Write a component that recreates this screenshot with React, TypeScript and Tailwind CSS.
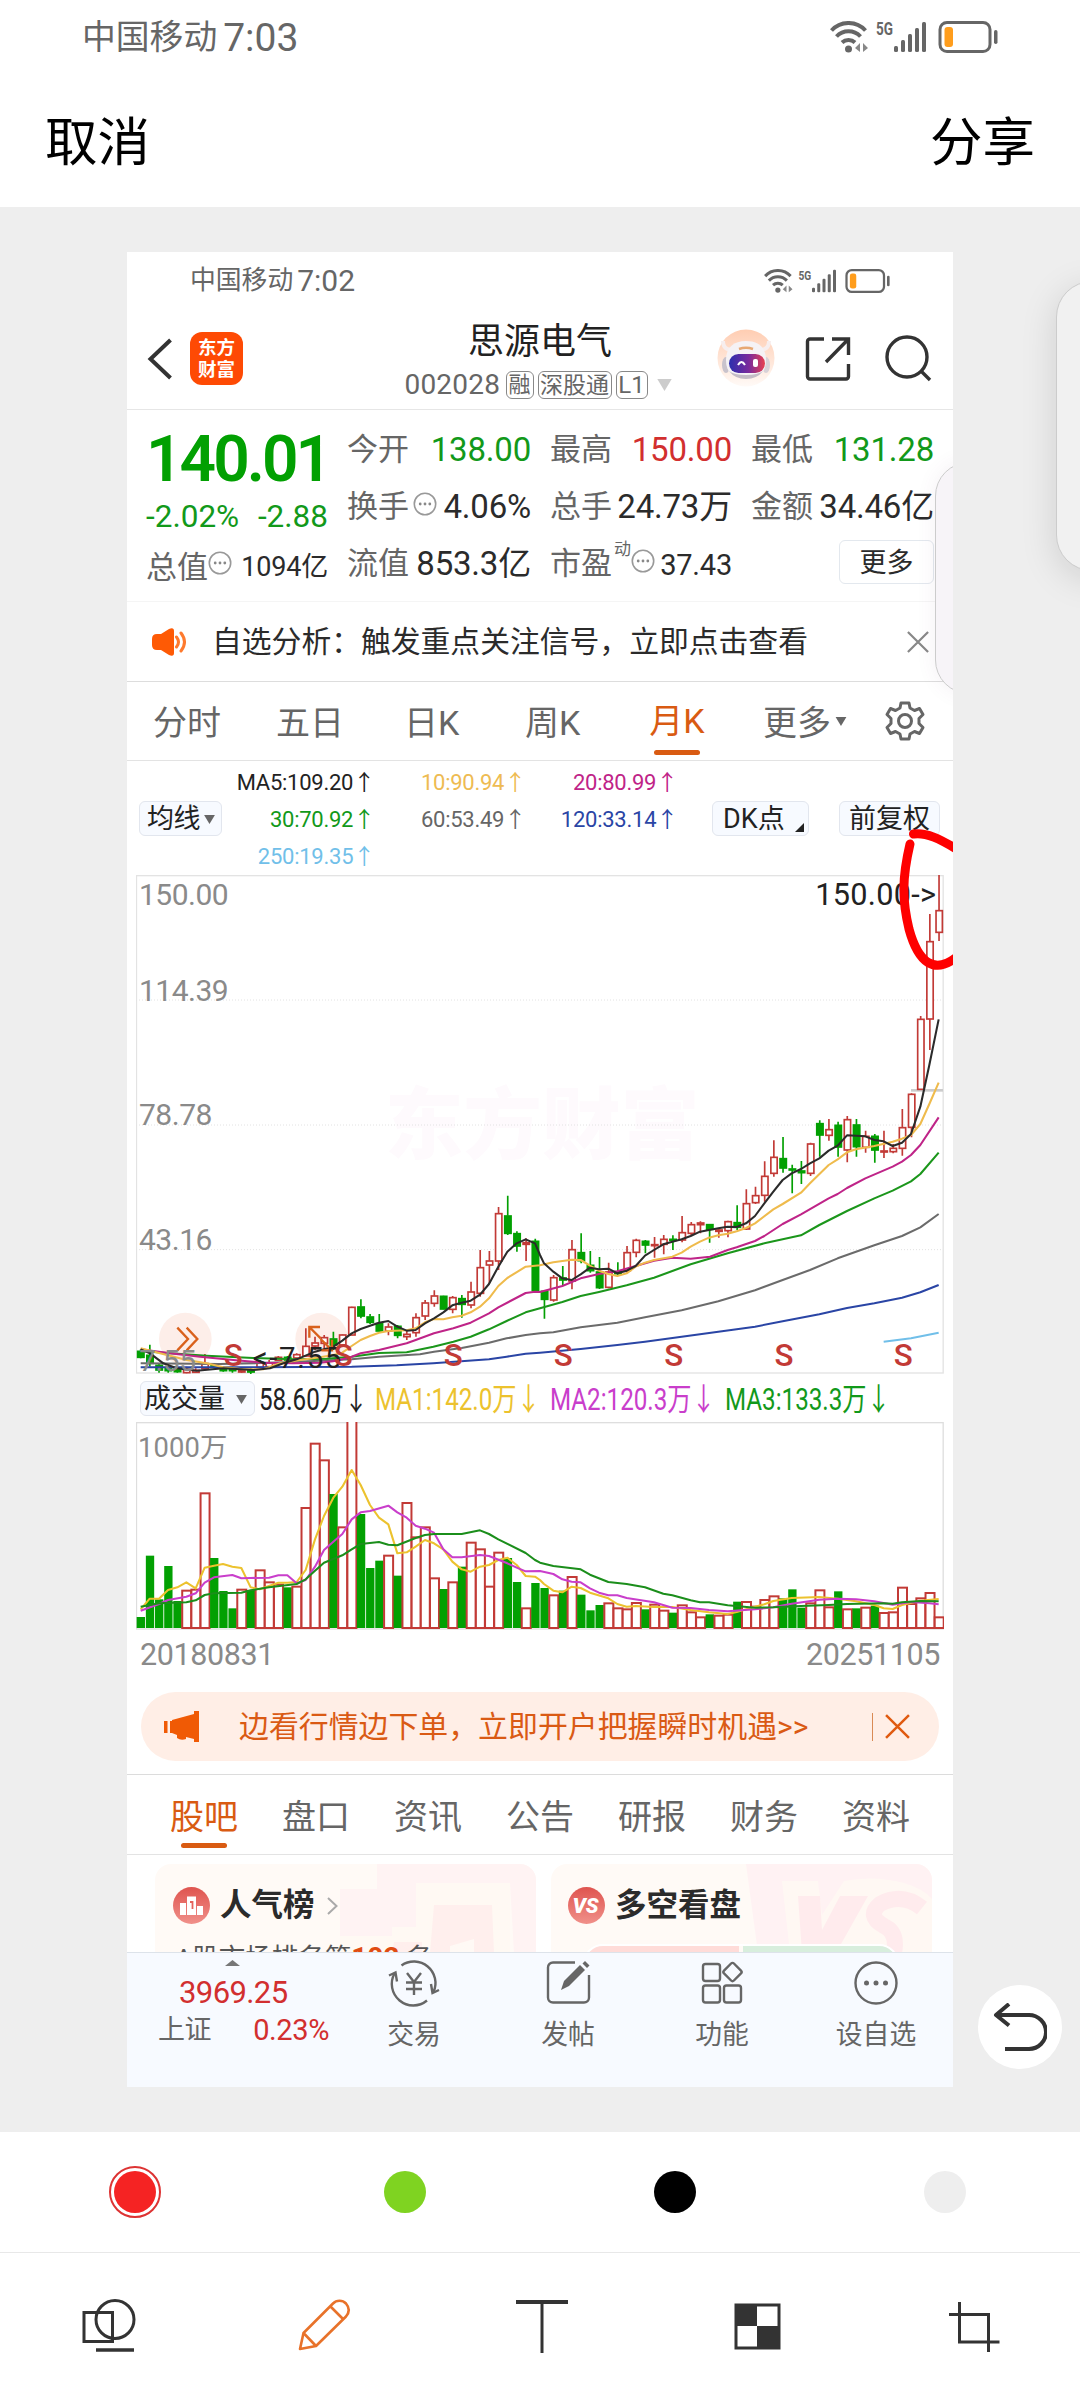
import type { ReactNode } from "react";

type Segment = { dx: number; dy: number; pts: string };

// [direction, high, body top, body bottom, low]
type Candle = [string, number, number, number, number];

const STEP = 27.53;
const FIRST = 14;

const UP = "#c23a36";
const DOWN = "#02a002";

const olderCandles: Candle[] = [
  ["g", 598, 603, 622, 625], ["g", 584, 615, 640, 650], ["g", 640, 645, 660, 668], ["g", 645, 655, 662, 668],
  ["g", 652, 655, 665, 668], ["r", 650, 657, 668, 670], ["r", 655, 660, 667, 668], ["r", 612, 640, 656, 660],
  ["g", 640, 645, 650, 655], ["g", 650, 655, 662, 665], ["g", 650, 656, 662, 668], ["r", 655, 660, 666, 668],
  ["g", 655, 660, 666, 673], ["r", 630, 637, 652, 655], ["r", 630, 638, 650, 652], ["r", 618, 621, 631, 632],
  ["g", 618, 621, 630, 632], ["r", 610, 613, 624, 628], ["r", 535, 588, 618, 620], ["r", 560, 578, 588, 600],
  ["r", 555, 562, 580, 598], ["g", 545, 566, 585, 600], ["r", 553, 554, 585, 590], ["r", 470, 471, 555, 556],
  ["g", 448, 470, 498, 505], ["g", 492, 500, 517, 522], ["g", 492, 520, 543, 545], ["r", 520, 530, 543, 556],
  ["g", 525, 528, 556, 565], ["r", 540, 552, 560, 570], ["r", 490, 502, 548, 560], ["r", 450, 458, 498, 510],
  ["r", 421, 437, 460, 470], ["g", 437, 438, 477, 478], ["r", 438, 442, 478, 490], ["g", 435, 445, 463, 503],
  ["r", 395, 425, 465, 475], ["r", 300, 352, 430, 440], ["r", 303, 332, 345, 400], ["r", 171, 190, 333, 360],
  ["g", 137, 197, 250, 255], ["g", 244, 250, 288, 305], ["r", 265, 277, 283, 333], ["g", 266, 273, 421, 425],
];

const newerCandles: Candle[] = [
  ["g", 870, 873, 898, 956], ["r", 825, 832, 900, 905], ["g", 798, 833, 840, 855], ["r", 720, 748, 843, 868],
  ["g", 700, 757, 782, 790], ["g", 753, 795, 812, 818], ["g", 771, 815, 863, 867], ["r", 788, 815, 862, 865],
  ["g", 787, 814, 821, 828], ["r", 738, 757, 812, 818], ["r", 716, 720, 757, 772], ["g", 720, 723, 735, 760],
  ["r", 711, 733, 737, 773], ["r", 705, 717, 733, 763], ["g", 706, 717, 721, 750], ["r", 648, 697, 720, 727],
  ["r", 666, 673, 700, 705], ["r", 664, 668, 674, 700], ["g", 672, 673, 688, 728], ["r", 685, 689, 694, 713],
  ["r", 662, 664, 692, 712], ["g", 616, 667, 682, 690], ["r", 568, 610, 687, 690], ["r", 560, 586, 608, 612],
  ["r", 484, 528, 586, 605], ["r", 421, 471, 520, 530], ["g", 411, 475, 504, 518], ["g", 494, 506, 510, 580],
  ["g", 483, 512, 518, 552], ["r", 428, 431, 520, 528], ["g", 361, 370, 405, 470], ["r", 357, 388, 406, 422],
  ["g", 365, 375, 441, 470], ["r", 348, 358, 450, 487], ["g", 357, 374, 440, 470], ["r", 392, 408, 442, 458],
  ["g", 402, 408, 450, 488], ["r", 392, 452, 456, 474], ["r", 432, 444, 455, 460], ["r", 327, 382, 445, 467],
  ["r", 280, 282, 382, 412], ["r", 48, 57, 268, 270], ["r", -258, -176, 57, 150], ["r", -375, -269, -203, -177],
];

const candles = [
  ...olderCandles.map(([c, ...v]) => ({ c, v: v.map((n) => n + 825) })),
  ...newerCandles.map(([c, ...v]) => ({ c, v: v.map((n) => n + 375) })),
];

const older = (pts: string): Segment => ({ dx: -48, dy: 825, pts });
const newer = (pts: string): Segment => ({ dx: 1212, dy: 375, pts });
const olderVol = (pts: string): Segment => ({ dx: -48, dy: -126, pts });
const newerVol = (pts: string): Segment => ({ dx: 1212, dy: -126, pts });

const averages: { color: string; segs: Segment[] }[] = [
  {
    color: "#2a45a5",
    segs: [
      older("62,652 400,652 695,650 830,646 940,640 1107,628 1160,620 1217,611"),
      newer("0,1058 122,1047 232,1035 315,1025 425,1010 535,995 645,980 728,964 838,943 921,924 1003,910 1086,893 1141,877 1196,855"),
    ],
  },
  {
    color: "#6b6b6b",
    segs: [
      older("62,640 300,642 500,637 695,628 777,620 900,613 942,605 1025,594 1107,578 1160,565 1217,555"),
      newer("0,1000 40,997 122,982 232,968 315,952 425,931 535,904 645,871 728,840 810,810 893,775 1003,736 1086,708 1141,682 1196,642"),
    ],
  },
  {
    color: "#1b961b",
    segs: [
      older("62,603 150,610 260,617 400,624 520,628 620,626 695,620 777,609 860,607 940,590 1000,575 1052,560 1107,538 1160,513 1217,487"),
      newer("0,925 67,906 122,888 177,876 260,856 342,833 452,793 563,760 673,730 783,706 838,675 921,633 1003,595 1058,572 1113,544 1141,522 1196,458"),
    ],
  },
  {
    color: "#bf2488",
    segs: [
      older("62,598 150,610 240,620 340,630 430,638 520,640 600,638 650,632 695,620 722,610 777,600 860,580 887,570 942,550 1000,535 1052,518 1107,490 1135,472 1217,429 1245,425"),
      newer("0,876 67,858 122,835 177,822 232,814 287,798 342,782 397,773 452,776 510,770 563,750 590,742 645,723 673,708 728,672 783,643 866,595 893,582 921,564 976,535 1058,500 1086,485 1113,465 1141,435 1196,352"),
    ],
  },
  {
    color: "#efbb4c",
    segs: [
      older("62,595 120,610 200,630 260,640 310,652 370,658 430,658 480,640 540,630 600,622 640,615 667,608 695,588 722,570 750,558 777,548 805,543 860,541 887,535 915,517 942,507 970,508 997,502 1025,497 1052,487 1080,470 1107,445 1135,408 1162,384 1217,350 1245,347"),
      newer("0,796 40,787 95,779 122,780 150,797 177,812 205,822 232,828 260,820 287,800 315,788 342,780 397,770 425,758 452,740 480,725 507,713 535,706 563,701 590,694 618,684 645,670 700,628 728,612 783,578 810,550 866,495 893,478 921,457 948,448 1003,438 1058,425 1086,416 1113,405 1141,372 1168,312 1196,248"),
    ],
  },
  {
    color: "#2b2b2b",
    segs: [
      older("62,598 90,610 130,640 170,655 230,662 310,655 400,660 450,655 490,640 530,628 585,605 640,590 667,572 695,550 722,537 750,527 777,518 805,513 832,530 860,542 887,540 915,520 942,505 970,487 997,466 1025,458 1052,452 1080,434 1107,402 1135,350 1162,305 1190,280 1217,268 1245,280"),
      newer("0,765 12,790 40,815 67,835 95,840 122,823 150,803 177,808 205,806 232,820 260,812 287,798 315,767 342,750 370,733 397,725 425,718 452,708 480,695 507,690 535,685 563,680 590,681 618,670 645,648 673,610 700,575 728,540 755,520 783,507 810,490 838,475 866,452 893,437 921,406 976,409 1003,420 1031,424 1058,438 1086,428 1113,402 1141,320 1168,195 1196,58"),
    ],
  },
  { color: "#71bfe9", segs: [newer("1031,1025 1113,1015 1196,998")] },
];

const volumeTops = [
  711, 527, 658, 558, 663, 630, 627, 338, 534, 633, 685, 627, 630, 569, 605, 612, 622, 618, 382, 189, 239, 342,
  440, 120, 402, 564, 542, 525, 587, 367, 470, 440, 593, 627, 605, 560, 486, 506, 618, 516, 534, 606, 683, 609,
  624, 644, 632, 589, 644, 691, 675, 668, 683, 686, 667, 688, 672, 690, 698, 674, 695, 710, 703, 705, 702, 665,
  664, 678, 658, 647, 655, 628, 683, 668, 629, 680, 634, 686, 685, 681, 677, 697, 695, 621, 670, 653, 637, 710,
];
const volumeColors =
  "gggggrrrgggrgrrrgrrrrgrrgggrgrrrrgrgrrrrggrg" + "grgrgggrrrrgrrgrrrgrrgrrrrgggrrrgrgrgrrrrrrr";

const volumeAverages: { color: string; segs: Segment[] }[] = [
  {
    color: "#ecc22e",
    segs: [
      olderVol("62,688 89,656 117,656 144,630 172,622 199,607 227,625 254,563 282,557 309,552 337,560 364,564 392,622 419,628 447,618 475,608 502,608 530,606 557,570 585,478 612,408 640,353 667,320 695,270 722,315 750,375 777,413 805,433 832,520 860,517 887,500 915,480 942,490 970,508 997,545 1025,568 1052,575 1080,560 1107,555 1135,540 1162,533 1190,555 1217,588 1245,590"),
      newerVol("0,600 12,612 40,632 67,637 95,620 122,624 150,638 205,655 232,672 260,680 287,678 342,681 397,681 452,690 507,697 563,702 590,696 645,680 673,673 700,663 755,654 838,651 893,656 948,664 1003,675 1031,685 1058,687 1086,675 1141,662 1196,657"),
    ],
  },
  {
    color: "#c93ecb",
    segs: [
      olderVol("62,692 117,672 144,660 199,650 227,640 254,608 282,592 337,585 364,595 392,594 447,593 475,586 502,586 530,610 557,600 585,560 612,510 640,485 667,462 695,418 722,397 750,393 805,377 832,397 860,413 887,437 915,446 942,458 970,508 997,532 1025,532 1080,525 1107,528 1162,550 1190,563 1217,574"),
      newerVol("0,573 40,582 67,598 95,605 122,607 150,625 177,638 205,646 232,646 260,654 342,667 397,683 452,684 507,690 563,694 645,688 700,682 755,671 838,659 893,656 948,658 1003,664 1058,674 1113,666 1168,670 1196,673"),
    ],
  },
  {
    color: "#1b8e1b",
    segs: [
      olderVol("62,680 117,670 199,667 227,661 254,645 282,640 364,638 392,631 447,622 530,612 557,598 585,572 612,548 667,526 695,508 722,492 777,486 805,494 832,496 887,474 915,465 942,462 1025,462 1080,451 1107,462 1135,478 1217,519 1245,540"),
      newerVol("0,548 40,558 122,568 150,584 205,606 260,612 315,622 370,641 397,646 452,661 480,667 507,667 563,676 645,683 700,682 783,678 866,675 921,672 1031,670 1058,671 1086,667 1141,663 1196,664"),
    ],
  },
];

const joinSegments = (segs: Segment[]) =>
  segs
    .flatMap(({ dx, dy, pts }) =>
      pts.split(" ").map((p) => {
        const [x, y] = p.split(",").map(Number);
        return `${x + dx},${y + dy}`;
      })
    )
    .join(" ");

const Lines = ({ data }: { data: { color: string; segs: Segment[] }[] }) => (
  <>
    {data.map((line) => (
      <polyline
        key={line.color}
        points={joinSegments(line.segs)}
        fill="none"
        stroke={line.color}
        strokeWidth={6.2}
        strokeLinejoin="round"
      />
    ))}
  </>
);

const StatusIcons = ({ className }: { className: string }) => (
  <svg className={className} viewBox="0 0 168 32" fill="none">
    <g stroke="#666" strokeWidth="4">
      <path d="M1.500 9.500a23 23 0 0 1 34 0" />
      <path d="M6.500 15.500a16.500 16.500 0 0 1 24 0" />
      <path d="M12 21.500a9.500 9.500 0 0 1 13 0" />
    </g>
    <circle cx="18.500" cy="28" r="3.500" fill="#666" />
    <path d="M30 22v9l-5-4zM33 22v9l5-4z" fill="#888" />
    <text x="46" y="14" fontSize="18" fontWeight="700" fill="#666" textLength="17" lengthAdjust="spacingAndGlyphs">
      5G
    </text>
    <g fill="#666">
      <rect x="64" y="25" width="4" height="6" rx="1.500" />
      <rect x="71" y="19" width="4" height="12" rx="1.500" />
      <rect x="78" y="13" width="4" height="18" rx="1.500" />
      <rect x="85" y="7" width="4" height="24" rx="1.500" />
      <rect x="92" y="1" width="4" height="30" rx="1.500" />
    </g>
    <rect x="110" y="1.500" width="50" height="29" rx="7" stroke="#666" strokeWidth="3" />
    <rect x="114.500" y="6" width="8.500" height="20" rx="3" fill="#ff9d1c" />
    <rect x="164" y="9" width="3.500" height="14" rx="1.700" fill="#666" />
  </svg>
);

const CircleDots = () => (
  <svg className="size-6" viewBox="0 0 24 24" fill="none">
    <circle cx="12" cy="12" r="10.700" stroke="#999" strokeWidth="1.600" />
    <g fill="#888">
      <circle cx="7.200" cy="12" r="1.400" />
      <circle cx="12" cy="12" r="1.400" />
      <circle cx="16.800" cy="12" r="1.400" />
    </g>
  </svg>
);

const Cross = ({ className, color }: { className: string; color: string }) => (
  <svg className={className} viewBox="0 0 24 24" fill="none" stroke={color} strokeWidth="2.400">
    <path d="M1 1l22 22M23 1L1 23" />
  </svg>
);

const Triangle = ({ className }: { className: string }) => (
  <svg className={className} viewBox="0 0 12 10" fill="currentColor">
    <path d="M0 0h12L6 10z" />
  </svg>
);

const TitleBar = () => (
  <header className="flex h-[102px] items-start border-b border-[#e6e6e6] pl-[20px]">
    <svg className="mt-[30px] h-[42px] w-[26px]" viewBox="0 0 26 42" fill="none" stroke="#333" strokeWidth="4">
      <path d="M23.500 2L3.500 21l20 19" />
    </svg>
    <div className="mt-6 ml-[17px] flex size-[53px] flex-col items-center justify-center rounded-xl bg-[#fe4a04] text-[18.500px] leading-[22px] font-bold text-white">
      <span>东方</span>
      <span>财富</span>
    </div>
    <div className="ml-[149px] flex w-[296px] flex-col items-center">
      <h1 className="mt-[15px] text-[36px] leading-[38px] text-[#222]">思源电气</h1>
      <div className="mt-[10px] -ml-[3px] flex h-7 w-[268px] items-center gap-1 text-[25px] leading-none text-[#666]">
        <span className="w-[97px] text-[28px] tracking-[0.2px]">002028</span>
        <span className="flex h-7 w-7 items-center justify-center rounded-md border border-[#888] text-[22px]">融</span>
        <span className="flex h-7 w-[74px] items-center justify-center rounded-md border border-[#888] text-[23px]">深股通</span>
        <span className="flex h-7 w-8 items-center justify-center rounded-md border border-[#888] text-[24px]">L1</span>
        <Triangle className="ml-1 h-[12px] w-[17px] shrink-0 text-[#ccc]" />
      </div>
    </div>
    <svg className="mt-[21px] ml-[29px] size-[58px]" viewBox="0 0 58 58">
      <defs>
        <linearGradient id="halo" x1="0" y1="0" x2="0" y2="1">
          <stop offset="0" stopColor="#ffcdb2" />
          <stop offset="1" stopColor="#fffaf7" />
        </linearGradient>
        <linearGradient id="visor" x1="0" y1="0" x2="1" y2="0">
          <stop offset="0" stopColor="#2c2fae" />
          <stop offset="0.550" stopColor="#7a2a9c" />
          <stop offset="1" stopColor="#e8404f" />
        </linearGradient>
      </defs>
      <circle cx="29" cy="29" r="28.500" fill="url(#halo)" />
      <path d="M6 12c0 8 6 10 12 8M52 12c0 8-6 10-12 8" fill="none" stroke="#f7eeee" strokeWidth="4" />
      <ellipse cx="9" cy="36" rx="4" ry="8" fill="#c9c3cc" />
      <ellipse cx="49" cy="36" rx="4" ry="8" fill="#d8d2d8" />
      <path d="M9 31c0-13 8-19 20-19s20 6 20 19-7 18-20 18S9 44 9 31z" fill="#f5f2f5" />
      <path d="M12 42q6 8 17 8t17-8q-5 4-17 4t-17-4z" fill="#c4bcc6" />
      <path d="M22 20q7-2.500 14 0" stroke="#e7a873" strokeWidth="2.500" fill="none" />
      <rect x="12" y="25" width="36" height="19" rx="9.500" fill="url(#visor)" />
      <path d="M21 36q3.500-6 7 0" stroke="#fff" strokeWidth="2" fill="none" />
      <rect x="36" y="30" width="5" height="8" rx="2" fill="#fff" />
    </svg>
    <svg className="mt-[28px] ml-[30px] h-[46px] w-[46px]" viewBox="0 0 46 46" fill="none" stroke="#333" strokeWidth="3.400">
      <path d="M19 3H5a2.500 2.500 0 0 0-2.500 2.500v35A2.500 2.500 0 0 0 5 43h36a2.500 2.500 0 0 0 2.500-2.500V28" />
      <path d="M27 3h16.500v16M43 3.500L21 26" />
    </svg>
    <svg className="mt-[26px] ml-[34px] size-[48px]" viewBox="0 0 48 48" fill="none" stroke="#333" strokeWidth="3.400">
      <circle cx="22" cy="23" r="20" />
      <path d="M36 37l9 9" />
    </svg>
  </header>
);

const Stat = ({ label, children, color = "text-[#2b2b2b]" }: { label: ReactNode; children: ReactNode; color?: string }) => (
  <div className="flex h-[57px] items-center justify-between whitespace-nowrap">
    <span className="flex items-center text-[31px] text-[#666]">{label}</span>
    <span className={`text-[33px] tracking-[-0.2px] ${color}`}>{children}</span>
  </div>
);

const Quote = () => (
  <section className="grid h-[192px] grid-cols-[181px_184px_182px_183px] gap-x-[19px] border-b border-[#f5f5f5] pl-5 leading-none">
    <div className="flex flex-col pt-[22px]">
      <span className="flex h-14 items-center justify-center text-[64px] font-semibold tracking-[-3px] text-[#02a002]">140.01</span>
      <span className="mt-0.5 -ml-px flex h-[54px] items-center justify-between text-[31.500px] text-[#12991a]">
        <span>-2.02%</span>
        <span>-2.88</span>
      </span>
      <span className="-ml-px flex h-[46px] items-center justify-between text-[31px] whitespace-nowrap text-[#666]">
        <span className="flex items-center">总值<span className="mb-2"><CircleDots /></span></span>
        <span className="text-[27px] tracking-[-0.2px] text-[#2b2b2b]">1094亿</span>
      </span>
    </div>
    <div className="pt-[11px]">
      <Stat label="今开" color="text-[#12991a]">138.00</Stat>
      <Stat label={<>换手<span className="mb-1.5 ml-1"><CircleDots /></span></>}>4.06%</Stat>
      <Stat label="流值">853.3亿</Stat>
    </div>
    <div className="pt-[11px]">
      <Stat label="最高" color="text-[#d22f2f]">150.00</Stat>
      <Stat label="总手">24.73万</Stat>
      <Stat label={<>市盈<span className="mb-7 ml-0.5 text-[17px]">动</span><span className="mb-1.5"><CircleDots /></span></>}>
        <span className="text-[29px]">37.43</span>
      </Stat>
    </div>
    <div className="pt-[11px]">
      <Stat label="最低" color="text-[#12991a]">131.28</Stat>
      <Stat label="金额">34.46亿</Stat>
      <button className="mt-[5px] ml-auto flex h-11 w-[95px] items-center justify-center rounded-md border border-[#e3e8ee] pt-0.5 text-[27px] text-[#2b2b2b]">
        更多
      </button>
    </div>
  </section>
);

const Notice = () => (
  <div className="flex h-20 items-center border-b border-[#ddd] pl-[25px] text-[29.8px] leading-none text-[#2b2b2b]">
    <svg className="h-[28px] w-[35px]" viewBox="0 0 35 28" fill="none">
      <path d="M0 11q0-5 5-5h4l8-5q5-2 5 2v22q0 4-5 2l-8-5H5q-5 0-5-5z" fill="#fe5a05" />
      <path d="M24.500 9q4 5 0 10M29 5q7 9 0 18" stroke="#fe7a2e" strokeWidth="3" strokeLinecap="round" />
    </svg>
    <span className="ml-[25px] w-[695px]">自选分析：触发重点关注信号，立即点击查看</span>
    <Cross className="h-[22px] w-[22px]" color="#888" />
  </div>
);

const periods = ["分时", "五日", "日K", "周K"];

const PeriodTabs = () => (
  <nav className="grid h-[79px] grid-cols-[123px_128px_121px_123px_115px_122px_60px] items-center border-b border-[#e3e3e3] pl-[26px] text-[34px] leading-none text-[#666]">
    {periods.map((p) => (
      <span key={p} className="mt-1">{p}</span>
    ))}
    <span className="flex h-full w-[58px] flex-col items-center justify-end text-[#d95b12]">
      <span className="mb-3">月K</span>
      <span className="mb-[5px] h-[5px] w-[46px] rounded-full bg-[#d95b12]" />
    </span>
    <span className="mt-1 flex items-center">
      更多
      <Triangle className="mb-1 ml-1 h-[9px] w-3" />
    </span>
    <svg className="size-10" viewBox="0 0 40 40" fill="none" stroke="#666" strokeWidth="3" strokeLinejoin="round">
      <path d="M16 2h8l1 5 4.500 2.500 5-2 3.500 6-4 4v5l4 4-3.500 6-5-2L25 33l-1 5h-8l-1-5-4.500-2.500-5 2-3.500-6 4-4v-5l-4-4 3.500-6 5 2L15 7z" />
      <circle cx="20" cy="20" r="6.500" />
    </svg>
  </nav>
);

const chip = "flex h-[35px] items-center rounded-md border border-[#e2e6ee] bg-[#f7faff] text-[27px] text-[#222]";

const AverageLegend = () => (
  <div className="flex h-[114px] items-start pl-3 leading-none whitespace-nowrap">
    <span className={`${chip} mt-[40px] w-[83px] pt-0.5 pl-[7px] tracking-[-0.5px]`}>
      均线
      <Triangle className="ml-1 h-[9px] w-[11px] text-[#666]" />
    </span>
    <div className="-mr-0.5 ml-0.5 grid w-[454px] grid-cols-[151px_151px_152px] pt-[3px] text-right text-[22px] leading-[37px] tracking-[-0.25px]">
      <span className="text-[#222]">MA5:109.20↑</span>
      <span className="text-[#eebb52]">10:90.94↑</span>
      <span className="text-[#bf2488]">20:80.99↑</span>
      <span className="text-[#12991a]">30:70.92↑</span>
      <span className="text-[#666]">60:53.49↑</span>
      <span className="text-[#2a45a5]">120:33.14↑</span>
      <span className="text-[#71bfe9]">250:19.35↑</span>
    </div>
    <span className={`${chip} mt-[40px] ml-[36px] w-[97px] justify-between pt-0.5 pr-1 pl-[10px]`}>
      DK点
      <svg className="mt-4 size-[9px]" viewBox="0 0 9 9">
        <path d="M9 0v9H0z" fill="#222" />
      </svg>
    </span>
    <span className={`${chip} mt-[40px] ml-[30px] w-[101px] justify-center pt-0.5`}>前复权</span>
  </div>
);

const scale = [
  { label: "150.00", y: 90 },
  { label: "114.39", y: 378 },
  { label: "78.78", y: 750 },
  { label: "43.16", y: 1125 },
  { label: "7.55", y: 1488 },
];

const PriceChart = () => (
  <svg className="ml-[9px] h-[499px] w-[808px]" viewBox="0 0 2424 1497">
    <text x="1218" y="834" fontSize="236" fontWeight="900" fill="#fefafd" textAnchor="middle">
      东方财富
    </text>
    <rect x="1.500" y="2" width="2420" height="1492" fill="none" stroke="#e3e3e3" strokeWidth="4" />
    <g stroke="#e2e2e2" strokeWidth="3" strokeDasharray="3 6">
      <path d="M0 375H2421M0 750H2421M0 1124H2421" />
    </g>
    <circle cx="148" cy="1392" r="79" fill="#fdeee9" />
    <circle cx="557" cy="1392" r="79" fill="#fdeee9" />
    <path d="M2325 646H2421" stroke="#ccc" strokeWidth="8" />
    {candles.map(({ c, v: [high, top, bottom, low] }, i) => {
      const x = FIRST + STEP * i;
      const color = c === "g" ? DOWN : UP;
      const height = Math.max(bottom - top, 3);
      return (
        <g key={i} stroke={color} strokeWidth={5} fill={c === "g" ? DOWN : "#fff"}>
          <path d={`M${x} ${high}V${top}M${x} ${bottom}V${low}`} />
          <rect x={x - 9} y={top + 1} width={19} height={height - 1} />
        </g>
      );
    })}
    <Lines data={averages} />
    <g fill="none" stroke="#d9611c" strokeWidth="7">
      <path d="M124 1358l32 34-32 34M152 1358l32 34-32 34" />
      <path d="M552 1356h-32v32M520 1356l34 34M556 1426h32v-32M588 1426l-34-34" />
    </g>
    <g fontSize="90" fill="#8a8a8a">
      {scale.map((s) => (
        <text key={s.label} x="9" y={s.y} letterSpacing="-1.500">{s.label}</text>
      ))}
    </g>
    <text x="2038" y="90" fontSize="92" fill="#222" textLength="362">150.00-&gt;</text>
    <text x="350" y="1480" fontSize="88" fill="#222" textLength="266">&lt;-7.55</text>
    <g fontSize="94" fontWeight="500" fill={UP} textAnchor="middle">
      {[292, 622, 952, 1282, 1613, 1944, 2302].map((x) => (
        <text key={x} x={x} y="1473">S</text>
      ))}
    </g>
  </svg>
);

const volumeLegend = [
  { text: "58.60万↓", color: "#222", width: 112 },
  { text: "MA1:142.0万↓", color: "#ecc22e", width: 171 },
  { text: "MA2:120.3万↓", color: "#c93ecb", width: 171 },
  { text: "MA3:133.3万↓", color: "#12991a", width: 171 },
];

const VolumeLegend = () => (
  <div className="flex h-12 items-center pl-[13px] leading-none whitespace-nowrap">
    <span className={`${chip} w-[115px] justify-between pt-0.5 pr-[7px] pl-[3px]`}>
      成交量
      <Triangle className="h-[9px] w-[11px] text-[#666]" />
    </span>
    {volumeLegend.map((v) => (
      <span key={v.text} className="mt-0.5 ml-1 text-[31px]" style={{ width: v.width, color: v.color }}>
        <span className="inline-block origin-left scale-x-[0.78]">{v.text}</span>
      </span>
    ))}
  </div>
);

const VolumeChart = () => (
  <svg className="ml-[9px] h-[208px] w-[808px]" viewBox="0 0 2424 624">
    <rect x="1.500" y="2" width="2420" height="619" fill="none" stroke="#dedede" strokeWidth="4" />
    {volumeTops.map((t, i) => {
      const x = FIRST + STEP * i;
      const y = Math.max(t - 126, -10);
      return volumeColors[i] === "g" ? (
        <rect key={i} x={x - 12} y={y} width={25} height={618 - y} fill={DOWN} />
      ) : (
        <rect key={i} x={x - 13} y={y + 2} width={27} height={616 - y} fill="#fff" stroke={UP} strokeWidth={6} />
      );
    })}
    <Lines data={volumeAverages} />
    <text x="6" y="105" fontSize="82" fill="#8a8a8a" textLength="268">1000万</text>
  </svg>
);

const Promo = () => (
  <div className="h-[95px] border-b border-[#dcdcdc] pt-3 pl-3.5">
    <div className="flex h-[69px] w-[798px] items-center rounded-full bg-[#ffeee6] pl-[23px] text-[29.9px] leading-none text-[#da5a14]">
      <svg className="h-8 w-[35px]" viewBox="0 0 35 32" fill="#f05a05">
        <path d="M0 10h3.500v12H0zM6 10h2v12H6zM8 9l22-6V0h5v31h-5v-3l-8-2v2q-5 2-9-1v-3l-5-2z" />
      </svg>
      <span className="ml-[40px] flex-1 whitespace-nowrap">边看行情边下单，立即开户把握瞬时机遇&gt;&gt;</span>
      <span className="h-7 w-px bg-[#d98a55]" />
      <Cross className="mr-[29px] ml-3 size-[25px]" color="#e05a10" />
    </div>
  </div>
);

const sections = ["股吧", "盘口", "资讯", "公告", "研报", "财务", "资料"];

const SectionTabs = () => (
  <nav className="flex h-20 border-b border-[#e3e3e3] pl-[21px] text-[34px] leading-none text-[#666]">
    {sections.map((s, i) => (
      <span key={s} className={`flex w-28 flex-col items-center pt-[25px] ${i === 0 ? "text-[#d95b12]" : ""}`}>
        {s}
        {i === 0 && <span className="mt-[9px] h-[5px] w-[46px] rounded-full bg-[#d95b12]" />}
      </span>
    ))}
  </nav>
);

const Cards = () => (
  <div className="flex h-[97px] gap-[15px] overflow-hidden pt-[9px] pl-7 leading-none">
    <div className="relative h-[140px] w-[381px] overflow-hidden rounded-2xl bg-[#fffaf6]">
      <svg className="absolute top-0 right-0 h-[89px] w-[196px]" viewBox="0 0 196 89">
        <path d="M37 0h159v89h-22l-4-70H76v44H52v9H0V25h37z" fill="#fff3f3" />
        <path d="M76 19h94v70H0V72h52v-9h24z" fill="#fff9f3" />
        <path d="M94 41h58l2 48H90zM54 78h28v11H52z" fill="#ffefed" />
        <path d="M110 82l24-7v14h-24z" fill="#fff9f5" />
      </svg>
      <div className="relative flex items-center pt-[23px] pl-[18px]">
        <svg className="size-[37px]" viewBox="0 0 37 37">
          <defs>
            <linearGradient id="badge" x1="0" y1="0" x2="0" y2="1">
              <stop offset="0" stopColor="#df544f" />
              <stop offset="1" stopColor="#f0908a" />
            </linearGradient>
          </defs>
          <circle cx="18.500" cy="18.500" r="18.500" fill="url(#badge)" />
          <path d="M7 16h6v12H7zM14 9.500h9V28h-9zM24 19h6v9h-6z" fill="#fff" />
          <path d="M17 15h2.500v7" stroke="#e5645d" strokeWidth="1.800" fill="none" />
        </svg>
        <span className="ml-2.5 text-[31.500px] font-bold text-[#2b2b2b]">人气榜</span>
        <svg className="ml-3 h-[18px] w-[11px]" viewBox="0 0 11 18" fill="none" stroke="#aaa" strokeWidth="2">
          <path d="M1 1l8.500 8L1 17" />
        </svg>
      </div>
      <div className="relative mt-[20px] pl-[20px] text-[26.500px] whitespace-nowrap text-[#555]">
        A股市场排名第<b className="text-[28px] text-[#e04c12]">102</b> 名
      </div>
    </div>
    <div className="relative h-[140px] w-[381px] overflow-hidden rounded-2xl bg-[#fffaf6]">
      <svg className="absolute top-0 right-0 h-[89px] w-[186px]" viewBox="0 0 186 89">
        <path d="M0 0h186v89H12z" fill="#fff2f3" />
        <path d="M36 17h36l4 34 22-34q30-6 60 2 20 6 28 16v54H44z" fill="#fff8f3" />
        <path d="M52 32h22l2 34 18-34h28L90 89H56z" fill="#ffebed" />
        <path d="M176 44q-20-16-42-4-14 12 4 22 14 6 10 27" fill="none" stroke="#ffebed" strokeWidth="16" />
      </svg>
      <div className="relative flex items-center pt-[23px] pl-[17px]">
        <svg className="size-[37px]" viewBox="0 0 37 37">
          <circle cx="18.500" cy="18.500" r="18.500" fill="url(#badge)" />
          <text x="17.500" y="26" fontSize="21" fontWeight="900" fontStyle="italic" fill="#fff" textAnchor="middle">VS</text>
        </svg>
        <span className="ml-2.5 text-[31.500px] font-bold text-[#2b2b2b]">多空看盘</span>
      </div>
      <div className="relative mt-[20px] ml-8 flex h-10 w-[316px] gap-1 overflow-hidden rounded-[20px] border-2 border-white">
        <span className="flex-1 bg-[#ffdcd9]" />
        <span className="flex-1 bg-[#d8eedd]" />
      </div>
    </div>
  </div>
);

const Action = ({ label, children }: { label: string; children: ReactNode }) => (
  <div className="flex w-[154px] flex-col items-center pt-[7px] text-[26.800px] text-[#666]">
    <svg className="size-[46px] overflow-visible" viewBox="0 0 46 46" fill="none" stroke="#666" strokeWidth="2.400">
      {children}
    </svg>
    <span className="mt-[16px]">{label}</span>
  </div>
);

const BottomBar = () => (
  <footer className="flex h-[135px] border-t border-[#dde3ea] bg-[#f7faff] leading-none">
    <div className="flex w-[210px] flex-col pl-8 text-[#d22f2f]">
      <svg className="mt-[7px] ml-[66px] h-[6px] w-[15px]" viewBox="0 0 15 6" fill="#777">
        <path d="M0 6L7.500 0 15 6z" />
      </svg>
      <span className="mt-[11px] ml-[20px] text-[31px] tracking-[-0.6px]">3969.25</span>
      <span className="mt-[8px] -ml-px flex w-[171px] items-center justify-between text-[29px] tracking-[-0.4px]">
        <span className="text-[27px] text-[#666]">上证</span>
        0.23%
      </span>
    </div>
    <Action label="交易">
      <path d="M10.500 5.500A21.500 21.500 0 0 1 42.500 32" />
      <path d="M36 40.500A21.500 21.500 0 0 1 3.500 13.500" />
      <path d="M-2 15.500l6.500-3 1.500 9M48 30l-6.500 3-1.500-9" />
      <path d="M16 13l7 9 7-9M15 22.500h16M15 29h16M23 22v13" />
    </Action>
    <Action label="发帖">
      <path d="M30 2.500H8A5 5 0 0 0 3 7.500v30a5 5 0 0 0 5 5h31a5 5 0 0 0 5-5V15" />
      <path d="M16 30l3-9L35 5l5 5-16 16z" fill="#666" stroke="none" />
      <path d="M37.500 3.500L40 1l4.500 4.500L42 8z" fill="#666" stroke="none" />
    </Action>
    <Action label="功能">
      <rect x="4" y="4" width="17" height="17" rx="2.500" />
      <rect x="4" y="25.500" width="17" height="17" rx="2.500" />
      <rect x="25" y="25.500" width="17" height="17" rx="2.500" />
      <rect x="26.500" y="5" width="14" height="14" rx="2" transform="rotate(45 33.500 12)" />
    </Action>
    <Action label="设自选">
      <circle cx="23" cy="23" r="20.500" />
      <g fill="#666" stroke="none">
        <circle cx="13.500" cy="23" r="2.500" />
        <circle cx="23" cy="23" r="2.500" />
        <circle cx="32.500" cy="23" r="2.500" />
      </g>
    </Action>
  </footer>
);

const StockShot = () => (
  <div className="relative h-[1835px] w-[826px] overflow-hidden bg-white">
    <div className="flex h-14 items-center justify-between pt-0.5 pr-[62px] pl-[63px] leading-none text-[#666]">
      <span className="flex items-center text-[25.800px]">
        中国移动<span className="ml-1 text-[30px]">7:02</span>
      </span>
      <StatusIcons className="h-[24px] w-[128px]" />
    </div>
    <TitleBar />
    <Quote />
    <Notice />
    <PeriodTabs />
    <AverageLegend />
    <PriceChart />
    <VolumeLegend />
    <VolumeChart />
    <div className="flex h-[50px] items-center justify-between pr-[13px] pl-[13px] text-[30.500px] leading-none tracking-[-0.4px] text-[#8a8a8a]">
      <span>20180831</span>
      <span>20251105</span>
    </div>
    <Promo />
    <SectionTabs />
    <Cards />
    <BottomBar />

    {/* side panel caught in the captured screen */}
    <div className="absolute top-[210px] left-[808px] h-[232px] w-20 rounded-[34px] border border-[#ccc] bg-[#f7f4f8] shadow-[0_0_20px_rgba(120,60,120,0.08)]" />

    {/* pen strokes */}
    <svg className="absolute top-[570px] right-0 h-[160px] w-[60px]" viewBox="893 822 60 160" fill="none" stroke="#fe0000" strokeWidth="9" strokeLinecap="round">
      <path d="M913.500 834C926 832 940 839 958 850" />
      <path d="M910 844C902 878 902 900 909 929C918 962 934 976 958 956" />
    </svg>
  </div>
);

const swatches = [
  { fill: "bg-[#f52323]", active: true },
  { fill: "bg-[#7fd321]", active: false },
  { fill: "bg-black", active: false },
  { fill: "bg-[#eeeeee]", active: false },
];

const Tool = ({ children, color = "#333" }: { children: ReactNode; color?: string }) => (
  <button className="flex flex-1 items-center justify-center">
    <svg className="size-[60px]" viewBox="0 0 60 60" fill="none" stroke={color} strokeWidth="3">
      {children}
    </svg>
  </button>
);

const App = () => (
  <div
    className="relative flex h-[2400px] w-[1080px] flex-col overflow-hidden bg-white"
    style={{ fontFamily: 'Roboto, "Noto Sans CJK SC", sans-serif' }}
  >
    <div className="flex h-[74px] items-center justify-between pr-[82px] pl-[82px] leading-none text-[#666]">
      <span className="flex items-center pt-0.5 text-[33.800px]">
        中国移动<span className="ml-1.5 text-[39px]">7:03</span>
      </span>
      <StatusIcons className="h-8 w-[168px]" />
    </div>
    <div className="flex h-[133px] items-center justify-between px-[45px] pt-1.5 text-[52.500px] leading-none text-black">
      <button>取消</button>
      <button>分享</button>
    </div>

    <main className="relative flex h-[1925px] items-center justify-center overflow-hidden bg-[#eeeeee]">
      <StockShot />
      <div className="absolute top-[74px] left-[1056px] h-[290px] w-20 rounded-[36px] border border-[#ccc] bg-[#f1f1f1] shadow-[0_8px_36px_rgba(0,0,0,0.13)]" />
      <button className="absolute top-[1778px] left-[978px] flex size-[84px] items-center justify-center rounded-full bg-white">
        <svg className="h-[48px] w-[54px]" viewBox="0 0 54 48" fill="none" stroke="#333" strokeWidth="4">
          <path d="M3 12h33a17 17 0 0 1 0 34H12" />
          <path d="M16 1L3 12l13 10.500" strokeLinejoin="round" />
        </svg>
      </button>
    </main>

    <div className="flex h-[121px] border-b border-[#e8e8e8]">
      {swatches.map((s) => (
        <span key={s.fill} className="flex flex-1 items-center justify-center">
          <span className={`flex size-[52px] items-center justify-center rounded-full ${s.active ? "border-[2.500px] border-[#dd3333]" : ""}`}>
            <span className={`size-[42px] shrink-0 rounded-full ${s.fill}`} />
          </span>
        </span>
      ))}
    </div>
    <div className="flex h-[147px] pb-1">
      <Tool>
        <rect x="6" y="17.500" width="28.500" height="29" />
        <circle cx="37" cy="24.500" r="19" />
        <path d="M18 55h38" strokeWidth="3.500" />
      </Tool>
      <Tool color="#e8722a">
        <path d="M6 54L9.500 38 39 8.500a9 9 0 0 1 13 0q5.500 6.500 0 13L22 51zM9.500 38L22 51M36.500 11.500L49 24" strokeWidth="2.600" strokeLinejoin="round" />
      </Tool>
      <Tool>
        <path d="M6 7h52" strokeWidth="4" />
        <path d="M32 7v51" />
      </Tool>
      <Tool>
        <rect x="10" y="10" width="43" height="43" />
        <path d="M9 9h22v22H9zM31 31h22v22H31z" fill="#333" stroke="none" />
      </Tool>
      <Tool>
        <path d="M17.500 7v40h40M7 19.500h39.500V57" />
      </Tool>
    </div>
  </div>
);

export default App;
